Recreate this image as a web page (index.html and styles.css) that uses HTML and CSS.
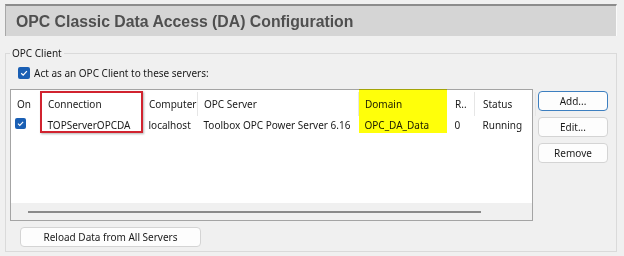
FILE: index.html
```html
<!DOCTYPE html>
<html>
<head>
  <title>OPC Classic Data Access (DA) Configuration</title>
  <link rel="stylesheet" href="styles.css">
</head>
<body>
  <div class="title">OPC Classic Data Access (DA) Configuration</div>

  <fieldset class="group">
    <legend>OPC Client</legend>

    <label class="check-row">
      <span class="check">
        <svg viewBox="0 0 12 12" width="12" height="12"><path d="M3.2 6.2 L5.2 8.1 L8.9 4.1" fill="none" stroke="#fff" stroke-width="1.2"/></svg>
      </span>
      <span>Act as an OPC Client to these servers:</span>
    </label>

    <div class="client-body">
      <div class="list">
        <table class="servers">
          <thead>
            <tr>
              <th class="col-on">On</th>
              <th class="col-conn">Connection</th>
              <th class="col-comp">Computer</th>
              <th class="col-server">OPC Server</th>
              <th class="col-domain">Domain</th>
              <th class="col-r">R..</th>
              <th class="col-status">Status</th>
            </tr>
          </thead>
          <tbody>
            <tr>
              <td class="col-on">
                <span class="check small">
                  <svg viewBox="0 0 12 12" width="11" height="11"><path d="M3.2 6.2 L5.2 8.1 L8.9 4.1" fill="none" stroke="#fff" stroke-width="1.2"/></svg>
                </span>
              </td>
              <td>TOPServerOPCDA</td>
              <td>localhost</td>
              <td>Toolbox OPC Power Server 6.16</td>
              <td>OPC_DA_Data</td>
              <td class="col-r">0</td>
              <td class="col-status">Running</td>
            </tr>
          </tbody>
        </table>
        <div class="list-fill"></div>
        <div class="hscroll"><span class="thumb"></span></div>

        <!-- annotations drawn over the list -->
        <div class="mark-yellow"></div>
        <div class="mark-red"></div>
      </div>

      <div class="side-buttons">
        <button class="btn focused">Add...</button>
        <button class="btn">Edit...</button>
        <button class="btn">Remove</button>
      </div>
    </div>

    <button class="btn reload">Reload Data from All Servers</button>
  </fieldset>
</body>
</html>
```

FILE: styles.css
```css
body {
  margin: 0;
  background-color: #f0f0f0;
  font-family: "Noto Sans", sans-serif;
  font-size: 10px;
  color: #1a1a1a;
}

.title {
  margin: 4px 7px 0 5px;
  height: 30px;
  line-height: 32px;
  padding-left: 10px;
  background-color: #d5d5d5;
  border-top: 2px solid #8c8c8c;
  border-left: 1px solid #a8a8a8;
  border-right: 1px solid #fafafa;
  font-family: "Liberation Sans", Arial, sans-serif;
  font-weight: bold;
  font-size: 15.8px;
  color: #4f4f4f;
}

.group {
  margin: 10px 7px 0 5px;
  padding: 0 4px 4px 4px;
  border: 1px solid #dadada;
  min-width: 0;
}

.group legend {
  padding: 0 2px;
  font-size: 10px;
}

.check-row {
  display: flex;
  align-items: center;
  gap: 4px;
  margin: 6px 0 0 8px;
  height: 14px;
}

.check {
  display: inline-flex;
  align-items: center;
  justify-content: center;
  width: 12px;
  height: 12px;
  border-radius: 2px;
  background-color: #1a5fb4;
}

.check.small {
  width: 11px;
  height: 11px;
}

.client-body {
  display: flex;
  gap: 5px;
  margin-top: 9px;
}

.list {
  position: relative;
  display: flex;
  flex-direction: column;
  width: 521px;
  height: 130px;
  background-color: #ffffff;
  border: 1px solid #a4a4a4;
}

.servers {
  margin-top: 2px;
  border-collapse: collapse;
  table-layout: fixed;
  width: 521px;
}

.servers th,
.servers td {
  padding: 0 0 0 6px;
  text-align: left;
  font-weight: normal;
  white-space: nowrap;
  overflow: hidden;
}

.servers th {
  height: 24px;
  border-right: 1px solid #e6e6e6;
}

.servers td {
  height: 18px;
}

.col-on { width: 24px; }
.col-conn { width: 94px; }
.col-comp { width: 48px; }
.col-server { width: 154px; }
.col-domain { width: 81px; }
.col-r { width: 19px; }
.col-status { width: 52px; }

.servers .col-r,
.servers .col-status {
  padding-left: 8px;
}

.servers td.col-on {
  padding-left: 4px;
}

.servers th.col-domain {
  border-right-color: transparent;
}

.list-fill {
  flex: 1;
}

.hscroll {
  display: flex;
  align-items: center;
  height: 17px;
  padding-left: 17px;
  background-color: #f0f0f0;
}

.hscroll .thumb {
  width: 453px;
  height: 2px;
  background-color: #8a8a8a;
}

.mark-yellow {
  position: absolute;
  left: 348px;
  top: -1px;
  width: 88px;
  height: 44px;
  background-color: #ffff0a;
  mix-blend-mode: multiply;
}

.mark-red {
  position: absolute;
  left: 29px;
  top: 1px;
  width: 99px;
  height: 38px;
  border: 2px solid #d1232f;
  box-shadow: 1px 1px 2px rgba(0, 0, 0, 0.3);
}

.side-buttons {
  display: flex;
  flex-direction: column;
  gap: 6px;
  padding-top: 2px;
}

.btn {
  width: 70px;
  height: 20px;
  padding: 0;
  background-color: #fdfdfd;
  border: 1px solid #d4d4d4;
  border-radius: 4px;
  font-family: "Noto Sans", sans-serif;
  font-size: 10px;
  color: #1a1a1a;
}

.btn.focused {
  border-color: #3d7fc0;
}

.btn.reload {
  display: block;
  width: 181px;
  margin: 6px 0 0 10px;
}
```
